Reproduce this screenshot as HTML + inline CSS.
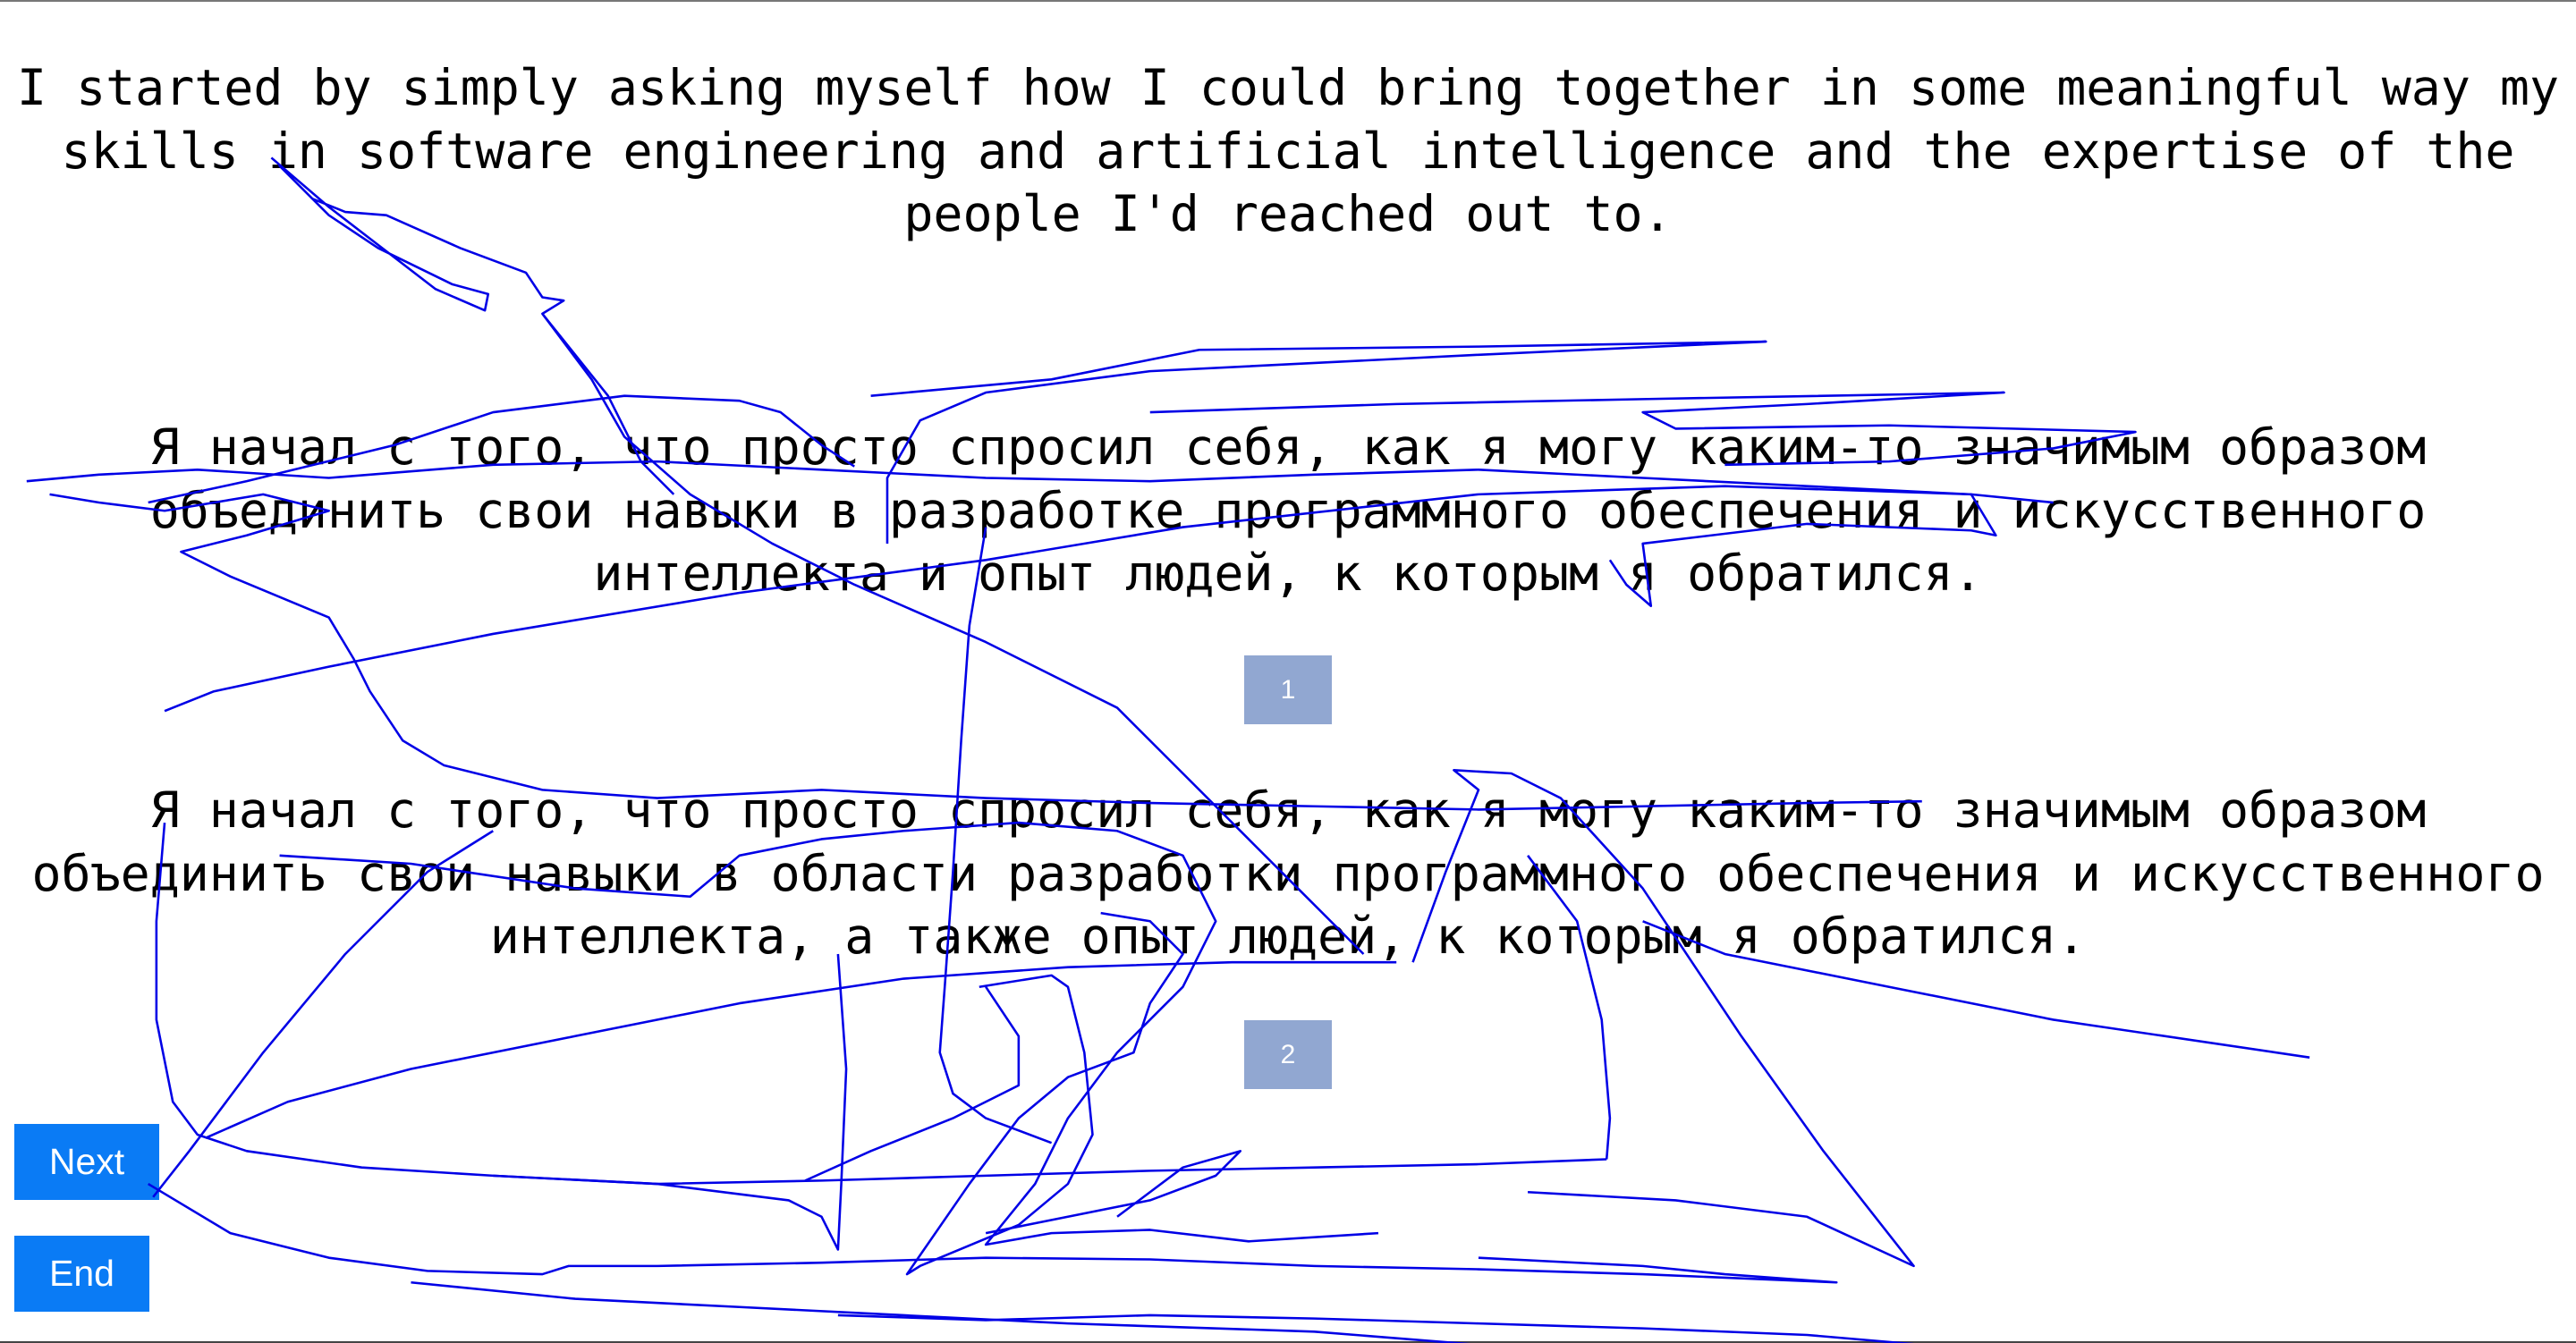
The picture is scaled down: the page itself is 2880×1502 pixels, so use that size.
<!DOCTYPE html>
<html><head><meta charset="utf-8"><style>
html,body{margin:0;padding:0;width:2880px;height:1502px;overflow:hidden;background:#fff;}
body{position:relative;border-top:2px solid #777;box-sizing:border-box;}
.t{position:absolute;left:0;width:2880px;text-align:center;font-family:"DejaVu Sans Mono","Liberation Mono",monospace;font-size:54.9px;line-height:70.5px;color:#000;}
.box{position:absolute;left:1391px;width:98px;height:77px;background:#91a7d1;color:#fff;font-family:"Liberation Sans",sans-serif;font-size:30px;text-align:center;line-height:77px;}
.btn{position:absolute;left:16px;height:85px;background:#0a7bf5;color:#fff;font-family:"Liberation Sans",sans-serif;font-size:41px;text-align:center;line-height:85px;}
.bot{position:absolute;left:0;top:1498px;width:2880px;height:4px;background:#444;}
svg{position:absolute;left:0;top:0;}
</style></head><body>
<div class="t" style="top:61px">I started by simply asking myself how I could bring together in some meaningful way my<br>skills in software engineering and artificial intelligence and the expertise of the<br>people I'd reached out to.</div>
<div class="t" style="top:463px">Я начал с того, что просто спросил себя, как я могу каким-то значимым образом<br>объединить свои навыки в разработке программного обеспечения и искусственного<br>интеллекта и опыт людей, к которым я обратился.</div>
<div class="box" style="top:731px">1</div>
<div class="t" style="top:869px">Я начал с того, что просто спросил себя, как я могу каким-то значимым образом<br>объединить свои навыки в области разработки программного обеспечения и искусственного<br>интеллекта, а также опыт людей, к которым я обратился.</div>
<div class="box" style="top:1139px">2</div>
<div class="btn" style="top:1255px;width:162px">Next</div>
<div class="btn" style="top:1380px;width:151px">End</div>
<div class="bot"></div>
<svg width="2880" height="1502" viewBox="0 0 1568 818" fill="none" stroke="#0000e6" stroke-width="1.4" stroke-linejoin="round">
<path d="M165 95 L200 125 L265 175 L295 188 L297 178 L275 172 L230 150 L200 130 L170 100 L190 120 L210 128 L235 130 L280 150 L320 165 L330 180 L343 182 L330 190 L360 230 L380 265 L420 300 L470 330 L520 355 L600 390 L680 430 L720 470 L760 510 L790 540 L830 580"/>
<path d="M330 190 L370 240 L390 280 L410 300"/>
<path d="M16 292 L60 288 L120 285 L200 290 L300 282 L400 280 L500 285 L600 290 L700 292 L800 288 L900 285 L1000 290 L1100 295 L1200 300 L1250 305"/>
<path d="M90 305 L150 292 L240 270 L300 250 L380 240 L450 243 L475 250 L500 270 L520 283"/>
<path d="M530 240 L640 230 L730 212 L900 210 L1075 207 L900 215 L700 225 L600 238 L560 255 L540 290 L540 330"/>
<path d="M700 250 L850 245 L1000 242 L1220 238 L1100 245 L1000 250 L1020 260 L1150 258 L1300 262 L1250 272 L1150 280 L1050 282"/>
<path d="M100 432 L130 420 L200 405 L300 385 L450 360 L600 340 L720 320 L900 300 L1050 295 L1200 300 L1215 325 L1200 322 L1100 318 L1000 330 L1005 368 L990 355 L980 340"/>
<path d="M30 300 L60 305 L100 310 L160 300 L200 310 L150 325 L110 335 L140 350 L200 375 L215 400 L225 420 L245 450 L270 465 L330 480 L400 485 L500 480 L600 485 L700 488 L800 490 L900 492 L1000 490 L1100 488 L1170 487"/>
<path d="M600 320 L590 380 L585 450 L580 530 L575 600 L572 640 L580 665 L600 680 L640 695"/>
<path d="M100 500 L95 560 L95 620 L105 670 L120 690 L150 700 L220 710 L300 715 L400 720 L500 718 L600 715 L700 712 L800 710 L900 708 L978 705"/>
<path d="M93 728 L115 700 L160 640 L210 580 L260 530 L300 505"/>
<path d="M125 692 L175 670 L250 650 L350 630 L450 610 L550 595 L650 588 L750 585 L850 585"/>
<path d="M860 585 L880 530 L900 480 L885 468 L920 470 L950 485 L1000 540 L1060 630 L1110 700 L1165 770 L1100 740 L1020 730 L930 725"/>
<path d="M930 520 L960 560 L975 620 L980 680 L978 705"/>
<path d="M1000 560 L1050 580 L1150 600 L1250 620 L1406 643"/>
<path d="M170 520 L250 525 L350 540 L420 545 L450 520 L500 510 L550 505 L620 500 L680 505 L720 520 L740 560 L720 600 L680 640 L650 680 L630 720 L600 757 L640 750 L700 748 L760 755 L839 750"/>
<path d="M596 600 L640 593 L650 600 L660 640 L665 690 L650 720 L620 745 L560 770 L552 775 L590 720 L620 680 L650 655 L690 640 L700 610 L720 580 L700 560 L670 555"/>
<path d="M510 580 L515 650 L512 720 L510 760 L500 740 L480 730 L400 720 L300 715"/>
<path d="M90 720 L140 750 L200 765 L260 773 L330 775 L346 770 L400 770 L500 768 L600 765 L700 766 L800 770 L900 772 L1000 775 L1118 780 L1050 775 L1000 770 L900 765"/>
<path d="M600 600 L620 630 L620 660 L580 680 L530 700 L490 718"/>
<path d="M510 800 L600 803 L700 800 L800 802 L900 805 L1000 808 L1100 812 L1170 818"/>
<path d="M250 780 L350 790 L450 795 L550 800 L650 805 L800 810 L900 818"/>
<path d="M680 740 L720 710 L755 700 L740 715 L700 730 L650 740 L600 750"/>
</svg>
</body></html>
